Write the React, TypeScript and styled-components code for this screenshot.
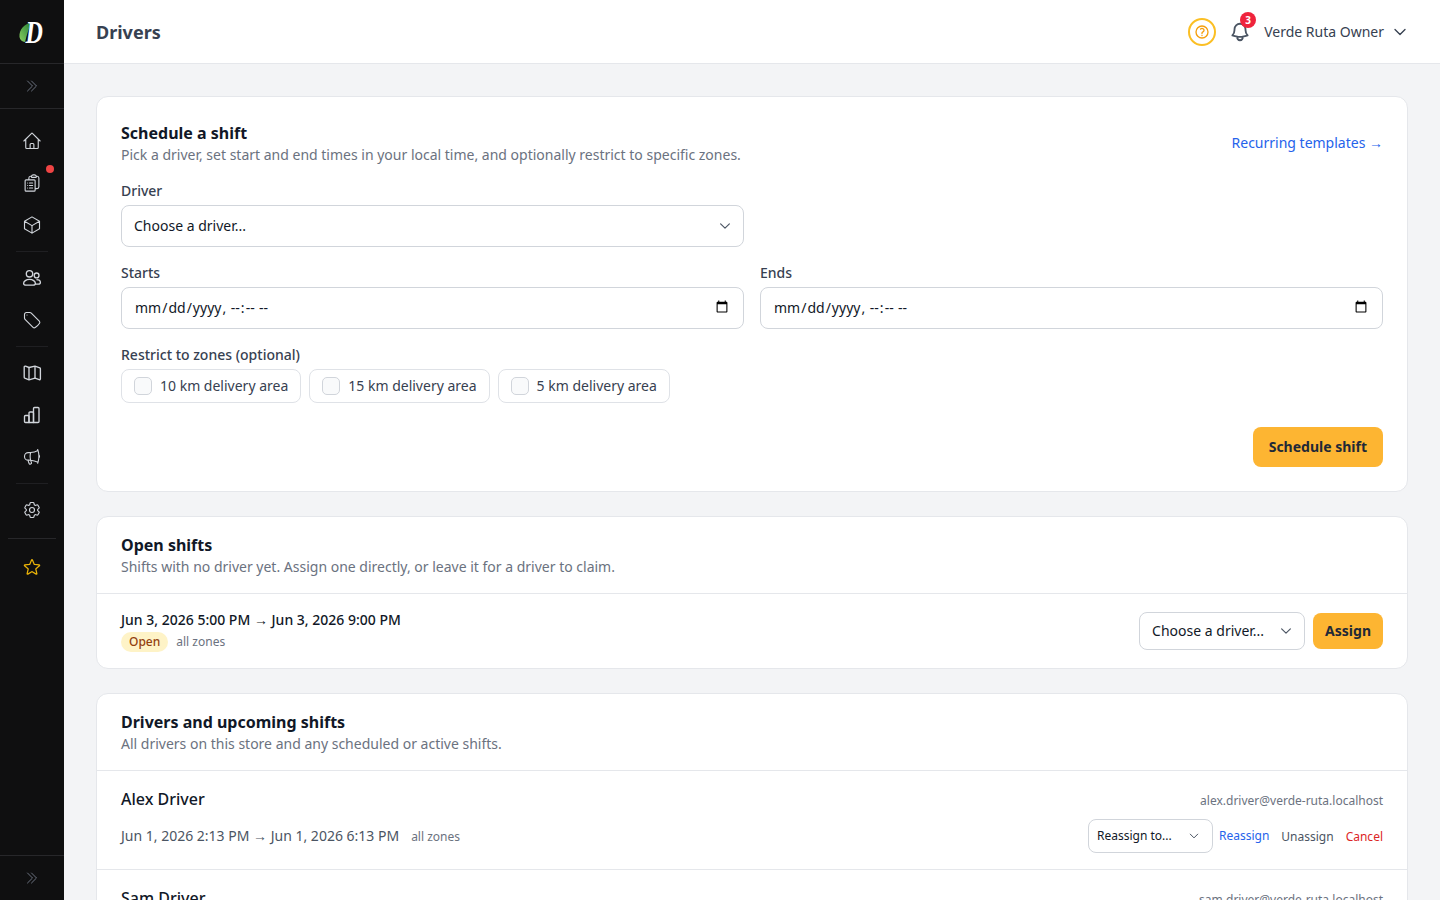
import React from 'react';
import styled, { createGlobalStyle } from 'styled-components';
import {
  HiOutlineBell,
  HiOutlineChevronDoubleRight,
  HiOutlineChevronDown,
  HiOutlineClipboardDocumentList,
  HiOutlineCog6Tooth,
  HiOutlineCube,
  HiOutlineHome,
  HiOutlineMegaphone,
  HiOutlineQuestionMarkCircle,
  HiOutlineStar,
  HiOutlineTag,
} from 'react-icons/hi2';

const GlobalStyle = createGlobalStyle`
  html, body {
    margin: 0;
    height: 100%;
    overflow: hidden;
  }
  body {
    font-family: "Noto Sans", sans-serif;
    color: #111827;
    background: #f3f4f6;
  }
  * {
    box-sizing: border-box;
  }
`;

const zones = ['10 km delivery area', '15 km delivery area', '5 km delivery area'];

const Logo = () => (
  <svg width="56" height="56" viewBox="-12 -12 56 56">
    <defs>
      <linearGradient id="leaf" x1="0" y1="1" x2="1" y2="0">
        <stop offset="0" stopColor="#8ad060" />
        <stop offset="1" stopColor="#1f7a33" />
      </linearGradient>
    </defs>
    <path d="M3.5 21 C3 13.5 8 8 16 6 C13 11 11 18 9 26 C6 25.5 4 24 3.5 21 Z" fill="url(#leaf)" />
    <text
      transform="translate(9.5 27) scale(0.75 1)"
      fontFamily="Liberation Serif, serif"
      fontStyle="italic"
      fontWeight="700"
      fontSize="32"
      fill="#ffffff"
    >
      D
    </text>
  </svg>
);

const MapIcon = () => (
  <svg width="20" height="20" viewBox="0 0 20 20" fill="none" stroke="currentColor" strokeWidth="1.25" strokeLinejoin="round">
    <path d="M7 4.5 3.5 3.2C2.9 3 2.2 3.4 2.2 4.1v10.2c0 .4.2.7.6.9L7 16.8l6-1.6 4.2 1.5c.6.2 1.2-.2 1.2-.9V5.7c0-.4-.2-.7-.6-.9L13 3.2 7 4.5Z" />
    <path d="M7 4.5v12.3M13 3.2v12" />
  </svg>
);

const BarsIcon = () => (
  <svg width="20" height="20" viewBox="0 0 20 20" fill="none" stroke="currentColor" strokeWidth="1.25" strokeLinejoin="round">
    <path d="M2.5 11.5c0-.6.4-1 1-1H6c.6 0 1 .4 1 1v6H3.5c-.6 0-1-.4-1-1v-5Z" />
    <path d="M7 17.5V8c0-.6.4-1 1-1h2.5c.6 0 1 .4 1 1v9.5H7Z" />
    <path d="M11.5 17.5V3.5c0-.6.4-1 1-1H16c.6 0 1 .4 1 1v13c0 .6-.4 1-1 1h-4.5Z" />
  </svg>
);

const PeopleIcon = () => (
  <svg width="20" height="20" viewBox="0 0 20 20" fill="none" stroke="currentColor" strokeWidth="1.25" strokeLinejoin="round">
    <circle cx="7.5" cy="5.8" r="3.2" />
    <circle cx="14.6" cy="7.4" r="2.4" />
    <path d="M1.6 15.4c0-2.2 2.6-4 5.9-4s5.9 1.8 5.9 4c0 1-1 1.8-2.4 1.8H4c-1.4 0-2.4-.8-2.4-1.8Z" />
    <path d="M14.4 11.6c2.2 0 4 1.2 4 2.8 0 1-.9 1.7-2.1 1.7h-3" />
  </svg>
);

type SelectProps = {
  label: string;
  size: 'sm' | 'md';
  width: number;
};

const Select = (props: SelectProps) => (
  <SelectWrap style={{ width: props.width }}>
    <NativeSelect $size={props.size} defaultValue="">
      <option value="">{props.label}</option>
    </NativeSelect>
    <SelectChevron $small={props.size === 'sm'}>
      <HiOutlineChevronDown />
    </SelectChevron>
  </SelectWrap>
);

const ShiftActions = () => (
  <Actions>
    <Select label="Reassign to..." size="sm" width={125} />
    <ReassignLink href="#">Reassign</ReassignLink>
    <SmallLink href="#" $color="#4b5563">Unassign</SmallLink>
    <SmallLink href="#" $color="#dc2626">Cancel</SmallLink>
  </Actions>
);

export default function App() {
  return (
    <Shell>
      <GlobalStyle />
      <Sidebar>
        <LogoBox><Logo /></LogoBox>
        <CollapseBar><HiOutlineChevronDoubleRight /></CollapseBar>
        <Nav>
          <NavItem><HiOutlineHome /></NavItem>
          <NavItem>
            <HiOutlineClipboardDocumentList />
            <RedDot />
          </NavItem>
          <NavItem><HiOutlineCube /></NavItem>
          <NavDivider />
          <NavItem><PeopleIcon /></NavItem>
          <NavItem><HiOutlineTag /></NavItem>
          <NavDivider />
          <NavItem><MapIcon /></NavItem>
          <NavItem><BarsIcon /></NavItem>
          <NavItem><HiOutlineMegaphone /></NavItem>
          <NavDivider />
          <NavItem><HiOutlineCog6Tooth /></NavItem>
          <WideDivider />
          <NavItem $gold><HiOutlineStar /></NavItem>
        </Nav>
        <FootBar><HiOutlineChevronDoubleRight /></FootBar>
      </Sidebar>

      <Body>
        <TopBar>
          <PageTitle>Drivers</PageTitle>
          <TopRight>
            <HelpButton><HiOutlineQuestionMarkCircle /></HelpButton>
            <BellButton>
              <HiOutlineBell />
              <BellBadge>3</BellBadge>
            </BellButton>
            <UserName>Verde Ruta Owner</UserName>
            <UserChevron><HiOutlineChevronDown /></UserChevron>
          </TopRight>
        </TopBar>

        <Main>
          <Card>
            <ScheduleBody>
              <ScheduleHead>
                <div>
                  <CardTitle>Schedule a shift</CardTitle>
                  <CardText>Pick a driver, set start and end times in your local time, and optionally restrict to specific zones.</CardText>
                </div>
                <TemplatesLink href="#">Recurring templates <Arrow>→</Arrow></TemplatesLink>
              </ScheduleHead>

              <FieldGrid>
                <Field>
                  <Label>Driver</Label>
                  <SelectWrap>
                    <NativeSelect $size="lg" defaultValue="">
                      <option value="">Choose a driver...</option>
                    </NativeSelect>
                    <SelectChevron><HiOutlineChevronDown /></SelectChevron>
                  </SelectWrap>
                </Field>
              </FieldGrid>

              <FieldGrid>
                <Field>
                  <Label>Starts</Label>
                  <DateInput type="datetime-local" />
                </Field>
                <Field>
                  <Label>Ends</Label>
                  <DateInput type="datetime-local" />
                </Field>
              </FieldGrid>

              <Field>
                <Label>Restrict to zones (optional)</Label>
                <ZoneRow>
                  {zones.map((zone) => (
                    <ZoneChip key={zone}>
                      <ZoneCheck type="checkbox" />
                      {zone}
                    </ZoneChip>
                  ))}
                </ZoneRow>
              </Field>

              <SubmitRow>
                <ScheduleButton>Schedule shift</ScheduleButton>
              </SubmitRow>
            </ScheduleBody>
          </Card>

          <Card>
            <SectionHead>
              <CardTitle>Open shifts</CardTitle>
              <CardText>Shifts with no driver yet. Assign one directly, or leave it for a driver to claim.</CardText>
            </SectionHead>
            <OpenRow>
              <div>
                <ShiftTime>Jun 3, 2026 5:00 PM <Arrow>→</Arrow> Jun 3, 2026 9:00 PM</ShiftTime>
                <ShiftMeta>
                  <OpenBadge>Open</OpenBadge>
                  <ZoneNote>all zones</ZoneNote>
                </ShiftMeta>
              </div>
              <OpenActions>
                <Select label="Choose a driver..." size="md" width={166} />
                <AssignButton>Assign</AssignButton>
              </OpenActions>
            </OpenRow>
          </Card>

          <Card>
            <SectionHead>
              <CardTitle>Drivers and upcoming shifts</CardTitle>
              <CardText>All drivers on this store and any scheduled or active shifts.</CardText>
            </SectionHead>
            <DriverRow>
              <DriverHead>
                <DriverName>Alex Driver</DriverName>
                <DriverEmail>alex.driver@verde-ruta.localhost</DriverEmail>
              </DriverHead>
              <DriverShift>
                <ShiftLeft>
                  <DriverTime>Jun 1, 2026 2:13 PM <Arrow>→</Arrow> Jun 1, 2026 6:13 PM</DriverTime>
                  <ZoneNote>all zones</ZoneNote>
                </ShiftLeft>
                <ShiftActions />
              </DriverShift>
            </DriverRow>
            <DriverRow>
              <DriverHead>
                <DriverName>Sam Driver</DriverName>
                <DriverEmail>sam.driver@verde-ruta.localhost</DriverEmail>
              </DriverHead>
            </DriverRow>
          </Card>
        </Main>
      </Body>
    </Shell>
  );
}

const Shell = styled.div`
  display: flex;
  height: 100vh;
  overflow: hidden;
`;

const Sidebar = styled.aside`
  width: 64px;
  flex-shrink: 0;
  display: flex;
  flex-direction: column;
  background: #0f0f10;
  color: #d1d5db;
`;

const LogoBox = styled.div`
  height: 64px;
  display: flex;
  align-items: center;
  justify-content: center;
  border-bottom: 1px solid #27272a;
`;

const CollapseBar = styled.div`
  height: 45px;
  display: flex;
  align-items: center;
  justify-content: center;
  border-bottom: 1px solid #27272a;
  color: #6b7280;
  font-size: 16px;
`;

const Nav = styled.nav`
  flex: 1;
  display: flex;
  flex-direction: column;
  padding-top: 12px;
  gap: 2px;
`;

const NavItem = styled.div<{ $gold?: boolean }>`
  position: relative;
  height: 40px;
  flex-shrink: 0;
  display: flex;
  align-items: center;
  justify-content: center;
  font-size: 20px;
  color: ${(p) => (p.$gold ? '#eab308' : '#d1d5db')};

  svg {
    stroke-width: ${(p) => (p.$gold ? 1.5 : 1.35)};
  }
`;

const RedDot = styled.span`
  position: absolute;
  top: 2px;
  right: 10px;
  width: 8px;
  height: 8px;
  border-radius: 50%;
  background: #ef4444;
`;

const NavDivider = styled.div`
  height: 1px;
  margin: 4px 16px;
  background: #1f1f22;
`;

const WideDivider = styled.div`
  height: 1px;
  margin: 6px 8px;
  background: #27272a;
`;

const FootBar = styled.div`
  height: 45px;
  display: flex;
  align-items: center;
  justify-content: center;
  border-top: 1px solid #27272a;
  color: #6b7280;
  font-size: 16px;
`;

const Body = styled.div`
  flex: 1;
  min-width: 0;
  display: flex;
  flex-direction: column;
`;

const TopBar = styled.header`
  height: 64px;
  flex-shrink: 0;
  display: flex;
  align-items: center;
  justify-content: space-between;
  padding: 0 32px;
  background: #ffffff;
  border-bottom: 1px solid #e5e7eb;
`;

const PageTitle = styled.h1`
  margin: 0;
  font-size: 18px;
  line-height: 28px;
  font-weight: 700;
  color: #374151;
`;

const TopRight = styled.div`
  display: flex;
  align-items: center;
`;

const HelpButton = styled.div`
  width: 28px;
  height: 28px;
  display: flex;
  align-items: center;
  justify-content: center;
  border: 2px solid #fbbf24;
  border-radius: 50%;
  color: #f59e0b;
  font-size: 16px;

  svg {
    stroke-width: 2;
  }
`;

const BellButton = styled.div`
  position: relative;
  width: 24px;
  height: 24px;
  margin-left: 12px;
  font-size: 22px;
  color: #4b5563;
  display: flex;
  align-items: center;
  justify-content: center;

  svg {
    stroke-width: 2;
  }
`;

const BellBadge = styled.span`
  position: absolute;
  top: -8px;
  right: -4px;
  width: 16px;
  height: 16px;
  border-radius: 50%;
  background: #ef233c;
  color: #ffffff;
  font-size: 10px;
  line-height: 16px;
  font-weight: 700;
  text-align: center;
`;

const UserName = styled.span`
  margin-left: 12px;
  font-size: 14px;
  line-height: 20px;
  color: #374151;
`;

const UserChevron = styled.span`
  margin-left: 8px;
  display: flex;
  font-size: 16px;
  color: #374151;

  svg {
    stroke-width: 2;
  }
`;

const Main = styled.main`
  flex: 1;
  min-height: 0;
  overflow: hidden;
  padding: 32px;
  display: flex;
  flex-direction: column;
  gap: 24px;
`;

const Card = styled.section`
  flex-shrink: 0;
  background: #ffffff;
  border: 1px solid #e5e7eb;
  border-radius: 12px;
`;

const ScheduleBody = styled.div`
  padding: 24px;
  display: flex;
  flex-direction: column;
  gap: 16px;
`;

const ScheduleHead = styled.div`
  display: flex;
  align-items: center;
  justify-content: space-between;
`;

const CardTitle = styled.h2`
  margin: 0;
  font-size: 16px;
  line-height: 24px;
  font-weight: 700;
  color: #111827;
`;

const CardText = styled.p`
  margin: 0;
  font-size: 14px;
  line-height: 20px;
  color: #6b7280;
`;

const TemplatesLink = styled.a`
  font-size: 14px;
  line-height: 20px;
  color: #2563eb;
  text-decoration: none;
`;

const Arrow = styled.span`
  font-size: 14px;
`;

const FieldGrid = styled.div`
  display: grid;
  grid-template-columns: 1fr 1fr;
  gap: 16px;
`;

const Field = styled.div`
  display: flex;
  flex-direction: column;
  gap: 4px;
  min-width: 0;
`;

const Label = styled.label`
  font-size: 14px;
  line-height: 20px;
  font-weight: 500;
  color: #374151;
`;

const SelectWrap = styled.div`
  position: relative;
  flex-shrink: 0;
`;

const selectHeights = { sm: '34px', md: '38px', lg: '42px' };

const NativeSelect = styled.select<{ $size: 'sm' | 'md' | 'lg' }>`
  appearance: none;
  display: block;
  width: 100%;
  height: ${(p) => selectHeights[p.$size]};
  padding: 0 ${(p) => (p.$size === 'sm' ? '8px' : '12px')} 2px;
  background: #ffffff;
  border: 1px solid #d1d5db;
  border-radius: 8px;
  font-family: "Noto Sans", sans-serif;
  font-size: ${(p) => (p.$size === 'sm' ? '12px' : '14px')};
  color: #111827;
`;

const SelectChevron = styled.span<{ $small?: boolean }>`
  position: absolute;
  top: 0;
  bottom: 0;
  right: ${(p) => (p.$small ? '13px' : '12px')};
  display: flex;
  align-items: center;
  font-size: ${(p) => (p.$small ? '12px' : '14px')};
  color: #4b5563;
  pointer-events: none;

  svg {
    stroke-width: 2;
  }
`;

const DateInput = styled.input`
  display: block;
  width: 100%;
  height: 42px;
  padding: 0 12px 2px;
  background: #ffffff;
  border: 1px solid #d1d5db;
  border-radius: 8px;
  font-family: "Noto Sans", sans-serif;
  font-size: 14px;
  color: #111827;
`;

const ZoneRow = styled.div`
  display: flex;
  gap: 8px;
`;

const ZoneChip = styled.label`
  display: flex;
  align-items: center;
  gap: 8px;
  padding: 6px 12px;
  border: 1px solid #dfe2e7;
  border-radius: 8px;
  font-size: 14px;
  line-height: 20px;
  color: #374151;
`;

const ZoneCheck = styled.input`
  appearance: none;
  width: 18px;
  height: 18px;
  margin: 0;
  background: #f9fafb;
  border: 1px solid #d1d5db;
  border-radius: 5px;
`;

const SubmitRow = styled.div`
  display: flex;
  justify-content: flex-end;
  padding-top: 8px;
`;

const ScheduleButton = styled.button`
  height: 40px;
  padding: 0 16px 2px;
  border: 0;
  border-radius: 8px;
  background: #fdb532;
  font-family: "Noto Sans", sans-serif;
  font-size: 14px;
  font-weight: 700;
  color: #1f2937;
`;

const SectionHead = styled.div`
  padding: 16px 24px;
  border-bottom: 1px solid #e5e7eb;
`;

const OpenRow = styled.div`
  display: flex;
  align-items: center;
  justify-content: space-between;
  padding: 16px 24px;
`;

const ShiftTime = styled.div`
  font-size: 14px;
  line-height: 20px;
  font-weight: 500;
  color: #111827;
`;

const ShiftMeta = styled.div`
  display: flex;
  align-items: center;
  gap: 8px;
  margin-top: 2px;
`;

const OpenBadge = styled.span`
  padding: 0 8px;
  line-height: 20px;
  font-size: 12px;
  font-weight: 500;
  color: #92400e;
  background: #fef3c7;
  border-radius: 10px;
`;

const ZoneNote = styled.span`
  font-size: 12px;
  line-height: 20px;
  color: #6b7280;
`;

const OpenActions = styled.div`
  display: flex;
  align-items: center;
  gap: 8px;
`;

const AssignButton = styled.button`
  height: 36px;
  padding: 0 12px 2px;
  border: 0;
  border-radius: 8px;
  background: #fdb532;
  font-family: "Noto Sans", sans-serif;
  font-size: 14px;
  font-weight: 700;
  color: #1f2937;
`;

const DriverRow = styled.div`
  padding: 16px 24px;
  border-bottom: 1px solid #e5e7eb;
`;

const DriverHead = styled.div`
  display: flex;
  align-items: baseline;
  justify-content: space-between;
`;

const DriverName = styled.div`
  font-size: 16px;
  line-height: 24px;
  font-weight: 500;
  color: #111827;
`;

const DriverEmail = styled.div`
  font-size: 12px;
  line-height: 16px;
  color: #6b7280;
`;

const DriverShift = styled.div`
  margin-top: 8px;
  display: flex;
  align-items: center;
  justify-content: space-between;
`;

const ShiftLeft = styled.div`
  display: flex;
  align-items: baseline;
  gap: 12px;
`;

const DriverTime = styled.span`
  font-size: 14px;
  line-height: 20px;
  color: #4b5563;
`;

const Actions = styled.div`
  display: flex;
  align-items: center;
  gap: 12px;
`;

const ReassignLink = styled.a`
  margin-left: -6px;
  font-size: 12px;
  line-height: 16px;
  color: #2563eb;
  text-decoration: none;
`;

const SmallLink = styled.a<{ $color: string }>`
  margin-top: 2px;
  font-size: 12px;
  line-height: 16px;
  color: ${(p) => p.$color};
  text-decoration: none;
`;
